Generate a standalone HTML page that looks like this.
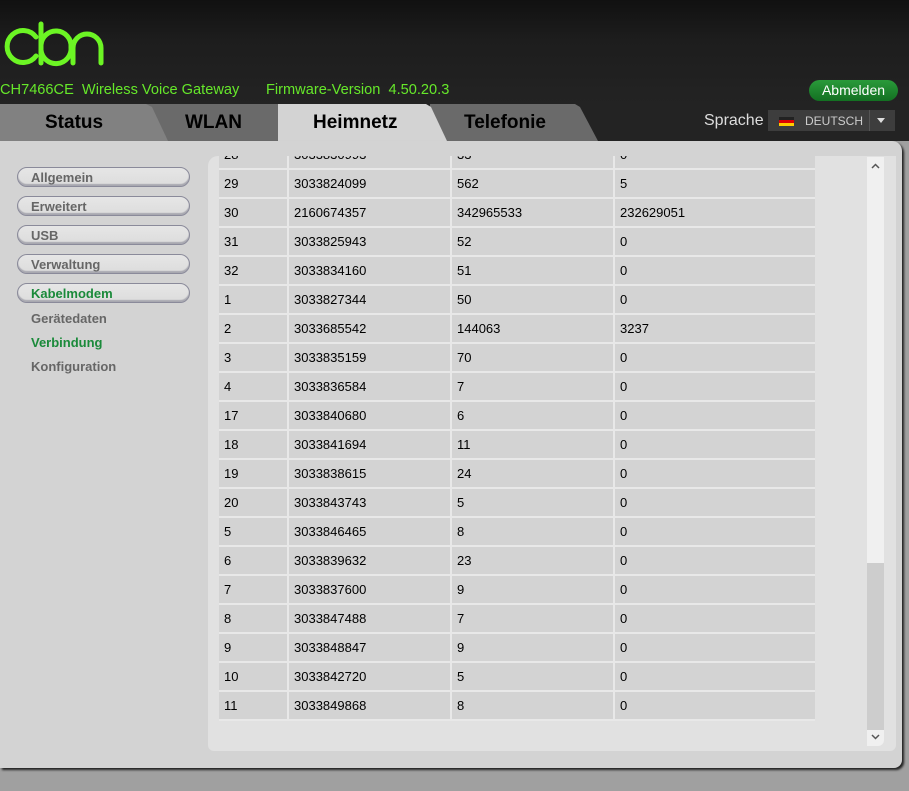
<!DOCTYPE html>
<html><head><meta charset="utf-8"><style>
*{margin:0;padding:0;box-sizing:border-box}
body{width:909px;height:791px;background:#a0a0a0;font-family:"Liberation Sans",Arial,sans-serif;position:relative;overflow:hidden}
#hdr{position:absolute;left:0;top:0;width:909px;height:141px;background:linear-gradient(#111 0,#1d1d1d 40px,#232323 104px,#232323)}
.tab{position:absolute;top:104px;height:37px;font-weight:bold;font-size:19px;color:#000;line-height:37px}
.tab span{position:absolute;top:0}
.g{color:#66e82a;font-size:14.6px;position:absolute;top:82px}
#panel{position:absolute;left:0;top:141px;width:902px;height:627px;background:#d3d3d3;border-radius:0 10px 8px 0;box-shadow:2px 2px 2px #222}
.btn{position:absolute;left:17px;width:173px;height:20px;border:1px solid #8a8a9a;border-radius:10px;background:linear-gradient(#e6e6e6,#dcdcdc);box-shadow:inset 0 -2px 1px #a8a8b0;font-weight:bold;font-size:13px;color:#666;padding-left:13px;line-height:19px}
.sub{position:absolute;left:31px;font-weight:bold;font-size:13px;color:#666}
#content{position:absolute;left:208px;top:156px;width:688px;height:595px;background:#e1e1e1;border-radius:10px 0 6px 6px;overflow:hidden}
table{position:absolute;left:11px;top:-15px;border-collapse:separate;border-spacing:0}
td{background:#d3d3d3;height:29px;border-right:2px solid #e8e8e8;border-bottom:2px solid #e8e8e8;font-size:13px;color:#000;padding-left:5px;vertical-align:middle}
td:nth-child(1){width:70px}td:nth-child(2){width:163px}td:nth-child(3){width:163px}td:nth-child(4){width:200px;border-right:0}
#sb{position:absolute;left:867px;top:157px;width:17px;height:589px;background:#f0f0f0;border-radius:0 0 6px 0}
</style></head><body>
<div id="hdr"></div>
<svg style="position:absolute;left:0;top:20px" width="110" height="50" viewBox="0 20 110 50"><g fill="none" stroke="#6cf524" stroke-width="5" stroke-linecap="round">
<path d="M36,37 A16,16 0 1 0 36,56"/>
<path d="M41,24 V63"/><path d="M41,45 A15,15 0 0 1 71,47 A15,15 0 0 1 41,50"/>
<path d="M73,63 V48 A14,14 0 0 1 101,48 V63"/></g></svg>
<div class="g" style="left:0">CH7466CE&nbsp; Wireless Voice Gateway</div>
<div class="g" style="left:266px">Firmware-Version&nbsp; 4.50.20.3</div>
<div style="position:absolute;left:809px;top:80px;width:89px;height:21px;border-radius:11px;background:linear-gradient(#2a9a3a,#137022);color:#fff;font-size:14px;text-align:center;line-height:20px">Abmelden</div>
<div style="position:absolute;left:704px;top:112px;color:#ddd;font-size:16px">Sprache</div>
<div style="position:absolute;left:768px;top:110px;width:127px;height:21px;background:#3d3d3d;color:#ccc;font-size:12px;line-height:22px">
<span style="position:absolute;left:11px;top:7px;width:15px;height:9px;background:linear-gradient(#222 33%,#d00 33%,#d00 66%,#fc0 66%)"></span>
<span style="position:absolute;left:37px">DEUTSCH</span>
<span style="position:absolute;left:101px;top:0;width:1px;height:21px;background:#555"></span>
<span style="position:absolute;left:109px;top:8px;border:4px solid transparent;border-top:5px solid #ddd"></span></div>
<div class="tab" style="left:0;width:300px;background:#6a6a6a;clip-path:polygon(0 0,278px 0,278px 100%,0 100%)"><span style="left:185px">WLAN</span></div>
<div class="tab" style="left:0;width:170px;background:#818181;clip-path:polygon(0 0,146px 0,152px 3px,168px 100%,0 100%)"><span style="left:45px">Status</span></div>
<div class="tab" style="left:427px;width:172px;background:#6a6a6a;clip-path:polygon(3px 0,148px 0,153px 3px,171px 100%,0 100%)"><span style="left:37px">Telefonie</span></div>
<div class="tab" style="left:278px;width:170px;background:#d3d3d3;clip-path:polygon(0 0,148px 0,153px 3px,169px 100%,0 100%)"><span style="left:35px">Heimnetz</span></div>
<div id="panel"></div>
<div class="btn" style="top:167px">Allgemein</div>
<div class="btn" style="top:196px">Erweitert</div>
<div class="btn" style="top:225px">USB</div>
<div class="btn" style="top:254px">Verwaltung</div>
<div class="btn" style="top:283px;color:#1a8a3a">Kabelmodem</div>
<div class="sub" style="top:311px">Gerätedaten</div>
<div class="sub" style="top:335px;color:#1a8a3a">Verbindung</div>
<div class="sub" style="top:359px">Konfiguration</div>
<div id="content"><table>
<tr><td>28</td><td>3033830993</td><td>33</td><td>0</td></tr>
<tr><td>29</td><td>3033824099</td><td>562</td><td>5</td></tr>
<tr><td>30</td><td>2160674357</td><td>342965533</td><td>232629051</td></tr>
<tr><td>31</td><td>3033825943</td><td>52</td><td>0</td></tr>
<tr><td>32</td><td>3033834160</td><td>51</td><td>0</td></tr>
<tr><td>1</td><td>3033827344</td><td>50</td><td>0</td></tr>
<tr><td>2</td><td>3033685542</td><td>144063</td><td>3237</td></tr>
<tr><td>3</td><td>3033835159</td><td>70</td><td>0</td></tr>
<tr><td>4</td><td>3033836584</td><td>7</td><td>0</td></tr>
<tr><td>17</td><td>3033840680</td><td>6</td><td>0</td></tr>
<tr><td>18</td><td>3033841694</td><td>11</td><td>0</td></tr>
<tr><td>19</td><td>3033838615</td><td>24</td><td>0</td></tr>
<tr><td>20</td><td>3033843743</td><td>5</td><td>0</td></tr>
<tr><td>5</td><td>3033846465</td><td>8</td><td>0</td></tr>
<tr><td>6</td><td>3033839632</td><td>23</td><td>0</td></tr>
<tr><td>7</td><td>3033837600</td><td>9</td><td>0</td></tr>
<tr><td>8</td><td>3033847488</td><td>7</td><td>0</td></tr>
<tr><td>9</td><td>3033848847</td><td>9</td><td>0</td></tr>
<tr><td>10</td><td>3033842720</td><td>5</td><td>0</td></tr>
<tr><td>11</td><td>3033849868</td><td>8</td><td>0</td></tr>
</table></div>
<div id="sb"><div style="position:absolute;left:0;top:406px;width:17px;height:167px;background:#cdcdcd"></div>
<svg style="position:absolute;left:4px;top:6px" width="9" height="6"><path d="M1,5 L4.5,1.5 L8,5" fill="none" stroke="#555" stroke-width="1.5"/></svg>
<svg style="position:absolute;left:4px;top:577px" width="9" height="6"><path d="M1,1 L4.5,4.5 L8,1" fill="none" stroke="#555" stroke-width="1.5"/></svg></div>
</body></html>
